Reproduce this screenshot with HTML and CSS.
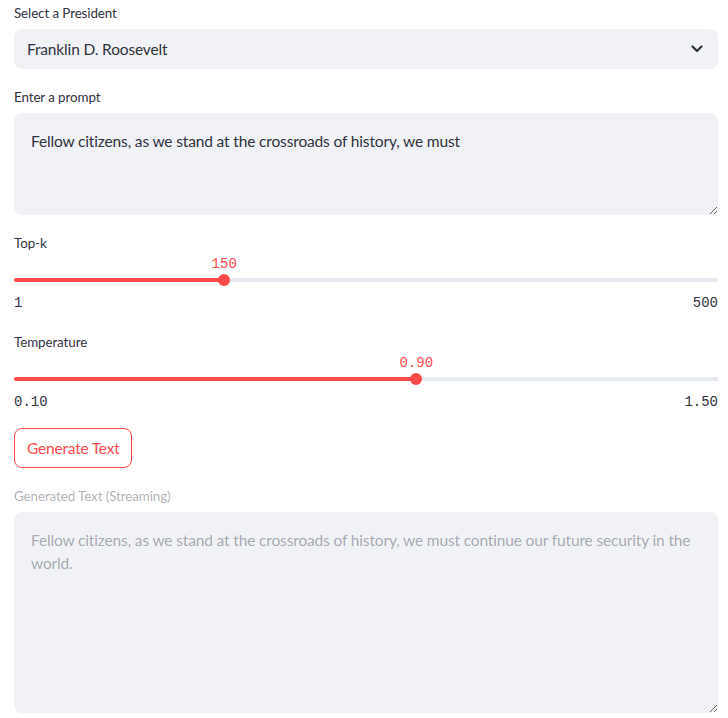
FILE: index.html
```html
<!DOCTYPE html>
<html>
<head>
<meta charset="utf-8">
<link rel="stylesheet" href="styles.css">
</head>
<body>
<main class="app">
  <section class="field">
    <label class="label">Select a President</label>
    <div class="select">
      <span class="select-value">Franklin D. Roosevelt</span>
      <svg class="chevron" width="12" height="8" viewBox="0 0 12 8"><polyline points="1.5,1.5 6,6 10.5,1.5" fill="none" stroke="#31333f" stroke-width="2.2" stroke-linecap="round" stroke-linejoin="round"/></svg>
    </div>
  </section>

  <section class="field">
    <label class="label">Enter a prompt</label>
    <textarea class="textarea prompt" readonly>Fellow citizens, as we stand at the crossroads of history, we must</textarea>
  </section>

  <section class="field">
    <label class="label">Top-k</label>
    <div class="slider">
      <div class="slider-value-row"><span class="slider-value" style="left: 29.86%">150</span></div>
      <div class="track"><div class="fill" style="width: 29.86%"></div><div class="thumb" style="left: 29.86%"></div></div>
      <div class="ticks"><span>1</span><span>500</span></div>
    </div>
  </section>

  <section class="field">
    <label class="label">Temperature</label>
    <div class="slider">
      <div class="slider-value-row"><span class="slider-value" style="left: 57.14%">0.90</span></div>
      <div class="track"><div class="fill" style="width: 57.14%"></div><div class="thumb" style="left: 57.14%"></div></div>
      <div class="ticks"><span>0.10</span><span>1.50</span></div>
    </div>
  </section>

  <div class="button-row">
    <button class="btn">Generate Text</button>
  </div>

  <section class="field">
    <label class="label disabled">Generated Text (Streaming)</label>
    <textarea class="textarea output" readonly>Fellow citizens, as we stand at the crossroads of history, we must continue our future security in the world.</textarea>
  </section>
</main>
</body>
</html>
```

FILE: styles.css
```css
* { box-sizing: border-box; }
html, body { margin: 0; padding: 0; background: #ffffff; }
body {
  font-family: Lato, "Noto Sans", sans-serif;
  color: #31333f;
  width: 728px;
  overflow: hidden;
}
.app {
  padding: 1px 10px 0 14px;
  display: flex;
  flex-direction: column;
  gap: 16px;
}
.field { display: flex; flex-direction: column; }
.label {
  font-size: 13.4px;
  letter-spacing: -0.1px;
  height: 24px;
  line-height: 24px;
  margin-bottom: 4px;
  color: #31333f;
}
.label.disabled { color: rgba(49, 51, 63, 0.4); }

.select {
  height: 40px;
  background: #f0f2f6;
  border-radius: 8px;
  display: flex;
  align-items: center;
  justify-content: space-between;
  padding: 0 15px 0 13px;
  font-size: 15.5px;
  letter-spacing: -0.15px;
}
.select-value { color: #31333f; }
.chevron { display: block; }

.textarea {
  display: block;
  width: 100%;
  background: #f0f2f6;
  border: none;
  border-radius: 8px;
  padding: 17px 16px 16px 17px;
  font-family: inherit;
  font-size: 15.5px;
  letter-spacing: -0.15px;
  line-height: 22.6px;
  color: #31333f;
  resize: vertical;
  outline: none;
}
.prompt { height: 102px; }
.output { height: 201px; color: rgba(49, 51, 63, 0.4); }

.slider {
  height: 59px;
  margin-top: -4px;
  display: flex;
  flex-direction: column;
  font-family: "Liberation Mono", "DejaVu Sans Mono", monospace;
  font-size: 14px;
}
.slider-value-row { position: relative; height: 17px; margin-top: 1px; }
.slider-value {
  position: absolute;
  top: 0;
  transform: translateX(-50%);
  color: #ff4b4b;
  line-height: 17px;
}
.track {
  position: relative;
  height: 4px;
  margin-top: 5px;
  background: #e6eaf1;
  border-radius: 2px;
}
.fill {
  height: 4px;
  background: #ff4b4b;
  border-radius: 2px;
}
.thumb {
  position: absolute;
  top: 50%;
  width: 12px;
  height: 12px;
  margin-left: -6px;
  margin-top: -6px;
  border-radius: 50%;
  background: #ff4b4b;
}
.ticks {
  display: flex;
  justify-content: space-between;
  margin-top: 13px;
  line-height: 17px;
  color: #31333f;
}

.button-row { display: flex; margin-top: -1px; }
.btn {
  height: 40px;
  padding: 0 11px 0 12px;
  background: #ffffff;
  border: 1px solid #ff4b4b;
  border-radius: 8px;
  color: #ff4b4b;
  font-family: inherit;
  font-size: 15.5px;
  letter-spacing: -0.2px;
}
```
